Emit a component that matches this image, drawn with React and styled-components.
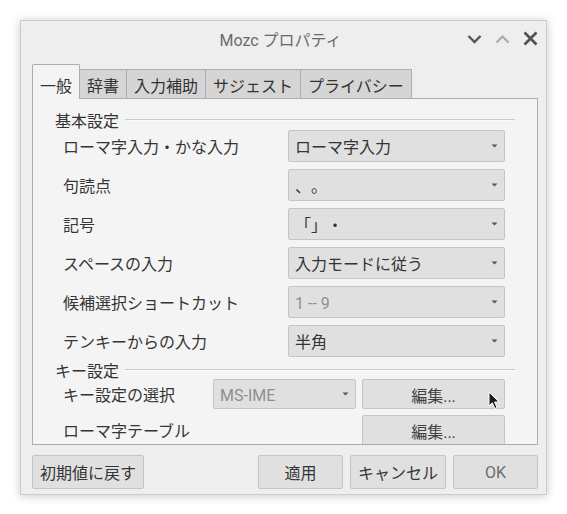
import React from 'react';
import styled, { createGlobalStyle } from 'styled-components';

const GlobalStyle = createGlobalStyle`
  html, body {
    margin: 0;
    padding: 0;
    background: #ffffff;
  }
  body {
    font-family: Roboto, "Noto Sans CJK JP", sans-serif;
    font-size: 16px;
    color: #353535;
    text-spacing-trim: space-all;
  }
  * {
    box-sizing: border-box;
  }
`;

const basicRows = [
  { label: 'ローマ字入力・かな入力', value: 'ローマ字入力' },
  { label: '句読点', value: '、。' },
  { label: '記号', value: '「」・' },
  { label: 'スペースの入力', value: '入力モードに従う' },
  { label: '候補選択ショートカット', value: '1 -- 9', disabled: true },
  { label: 'テンキーからの入力', value: '半角' },
];

const tabs = ['一般', '辞書', '入力補助', 'サジェスト', 'プライバシー'];

const ChevronDown = ({ color }) => (
  <svg width="15" height="10" viewBox="0 0 15 10">
    <path d="M1.5 2 L7.5 8 L13.5 2" fill="none" stroke={color} strokeWidth="2.4" />
  </svg>
);

const ChevronUp = ({ color }) => (
  <svg width="15" height="10" viewBox="0 0 15 10">
    <path d="M1.5 8.5 L7.5 2.5 L13.5 8.5" fill="none" stroke={color} strokeWidth="2.2" />
  </svg>
);

const CloseIcon = () => (
  <svg width="15" height="15" viewBox="0 0 15 15">
    <path d="M1.5 1.5 L13.5 13.5 M13.5 1.5 L1.5 13.5" fill="none" stroke="#505050" strokeWidth="2.6" />
  </svg>
);

const Caret = () => (
  <svg width="7" height="4" viewBox="0 0 7 4">
    <path d="M0.5 0.5 L6.5 0.5 L3.5 3.5 Z" fill="#555" />
  </svg>
);

const Pointer = () => (
  <svg width="14" height="20" viewBox="0 0 14 20">
    <path
      d="M1 1 L1 15 L4.3 11.8 L6.8 17.5 L9 16.5 L6.6 11 L11 11 Z"
      fill="#1e1e1e"
      stroke="#ffffff"
      strokeWidth="1"
      strokeLinejoin="round"
    />
  </svg>
);

const Combo = ({ value, disabled }) => (
  <ComboBox>
    <ComboText disabled={disabled}>{value}</ComboText>
    <Caret />
  </ComboBox>
);

const App = () => {
  return (
    <>
      <GlobalStyle />
      <Page>
        <Window>
          <TitleBar>
            <span />
            <Title>Mozc プロパティ</Title>
            <WindowButtons>
              <ChevronDown color="#555555" />
              <ChevronUp color="#ababab" />
              <CloseIcon />
            </WindowButtons>
          </TitleBar>
          <Body>
            <TabBar>
              {tabs.map((t, i) => (
                <Tab key={t} active={i === 0}>
                  {t}
                </Tab>
              ))}
            </TabBar>
            <Pane>
              <GroupHeader>
                <span>基本設定</span>
                <Rule />
              </GroupHeader>
              <BasicRows>
                {basicRows.map((r) => (
                  <BasicRow key={r.label}>
                    <Label>{r.label}</Label>
                    <Combo value={r.value} disabled={r.disabled} />
                  </BasicRow>
                ))}
              </BasicRows>
              <GroupHeader second>
                <span>キー設定</span>
                <Rule />
              </GroupHeader>
              <KeyRows>
                <KeyRow>
                  <Label>キー設定の選択</Label>
                  <Combo value="MS-IME" disabled />
                  <EditButton>
                    編集...
                    <CursorSpot>
                      <Pointer />
                    </CursorSpot>
                  </EditButton>
                </KeyRow>
                <KeyRow>
                  <Label>ローマ字テーブル</Label>
                  <span />
                  <EditButton>編集...</EditButton>
                </KeyRow>
              </KeyRows>
            </Pane>
            <Footer>
              <Button width="112px">初期値に戻す</Button>
              <Spacer />
              <Button width="85px">適用</Button>
              <Button width="96px">キャンセル</Button>
              <Button width="85px" dim>OK</Button>
            </Footer>
          </Body>
        </Window>
      </Page>
    </>
  );
};

export default App;

const Page = styled.div`
  width: 567px;
  height: 514px;
  padding: 20px 0 0 20px;
`;

const Window = styled.div`
  width: 527px;
  background: #eeeeee;
  border: 1px solid #cdcdcd;
  box-shadow: 0 1px 9px rgba(0, 0, 0, 0.22);
`;

const TitleBar = styled.div`
  height: 43px;
  padding: 0 8px 4px 0;
  display: grid;
  grid-template-columns: 1fr auto 1fr;
  align-items: center;
`;

const Title = styled.div`
  color: #6a6a6a;
  font-size: 16px;
  line-height: 20px;
  padding-left: 2px;
`;

const WindowButtons = styled.div`
  justify-self: end;
  display: flex;
  align-items: center;
  gap: 13px;
  margin-top: -4px;
  svg {
    display: block;
  }
`;

const Body = styled.div`
  padding: 0 8px 5px 11px;
`;

const TabBar = styled.div`
  height: 34px;
  display: flex;
  align-items: flex-end;
`;

const Tab = styled.div`
  position: relative;
  z-index: ${(p) => (p.active ? 1 : 0)};
  height: ${(p) => (p.active ? '35px' : '29px')};
  margin-bottom: ${(p) => (p.active ? '-1px' : '0')};
  margin-left: ${(p) => (p.active ? '0' : '-1px')};
  padding: 0 7px ${(p) => (p.active ? '2px' : '1px')};
  display: flex;
  align-items: flex-end;
  line-height: 20px;
  font-size: 16px;
  color: #333;
  background: ${(p) => (p.active ? '#f4f4f4' : '#d5d5d5')};
  border: 1px solid #adadad;
  border-bottom: none;
  border-radius: ${(p) => (p.active ? '2px 2px 0 0' : '0')};
`;

const Pane = styled.div`
  height: 347px;
  overflow: hidden;
  background: #f4f4f4;
  border: 1px solid #adadad;
  padding: 10px 22px 0 22px;
`;

const GroupHeader = styled.div`
  height: 21px;
  margin-top: ${(p) => (p.second ? '2px' : '0')};
  display: flex;
  align-items: center;
  gap: 6px;
  line-height: 21px;
  font-size: 16px;
  color: #333;
  span {
    padding-top: 3px;
  }
`;

const Rule = styled.div`
  flex: 1;
  height: 1px;
  margin-top: -1px;
  background: #cacaca;
  box-shadow: 0 1px 0 #fbfbfb;
`;

const BasicRows = styled.div`
  display: flex;
  flex-direction: column;
  gap: 7px;
`;

const BasicRow = styled.div`
  display: grid;
  grid-template-columns: 1fr 217px;
  align-items: center;
  height: 32px;
  padding: 0 10px 0 8px;
`;

const KeyRows = styled.div`
  margin-top: -1px;
  display: flex;
  flex-direction: column;
  gap: 6px;
`;

const KeyRow = styled.div`
  display: grid;
  grid-template-columns: 1fr 143px 143px;
  column-gap: 6px;
  align-items: stretch;
  height: 30px;
  padding: 0 10px 0 8px;
`;

const Label = styled.div`
  align-self: center;
  padding-top: 3px;
  font-size: 16px;
  line-height: 20px;
  color: #353535;
  white-space: nowrap;
`;

const ComboBox = styled.div`
  height: 100%;
  display: flex;
  align-items: center;
  justify-content: space-between;
  padding: 0 6px 0 6px;
  background: #e0e0e0;
  border: 1px solid #c5c5c5;
  border-radius: 2px;
`;

const ComboText = styled.span`
  padding-top: 3px;
  font-size: 16px;
  line-height: 20px;
  color: ${(p) => (p.disabled ? '#8f8f8f' : '#333')};
  white-space: nowrap;
`;

const EditButton = styled.div`
  position: relative;
  display: flex;
  align-items: center;
  justify-content: center;
  padding-top: 2px;
  font-size: 16px;
  color: #404040;
  background: #e0e0e0;
  border: 1px solid #c5c5c5;
  border-radius: 2px;
`;

const CursorSpot = styled.div`
  position: absolute;
  left: 125px;
  top: 11px;
  svg {
    display: block;
  }
`;

const Footer = styled.div`
  margin-top: 10px;
  display: flex;
  gap: 7px;
`;

const Spacer = styled.div`
  flex: 1;
`;

const Button = styled.div`
  width: ${(p) => p.width};
  height: 34px;
  display: flex;
  align-items: center;
  justify-content: center;
  font-size: 16px;
  color: ${(p) => (p.dim ? '#6c6c6c' : '#353535')};
  background: #e0e0e0;
  border: 1px solid #c5c5c5;
  border-radius: 2px;
`;
